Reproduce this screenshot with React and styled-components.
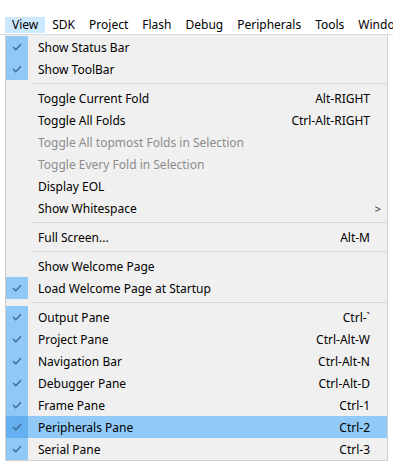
import React from "react";
import styled, { createGlobalStyle } from "styled-components";

const GlobalStyle = createGlobalStyle`
  body {
    margin: 0;
    background: #ffffff;
    font-family: "Noto Sans", "Open Sans", sans-serif;
    font-size: 12px;
    color: #000;
  }
`;

const Page = styled.div`
  width: 393px;
  height: 465px;
  overflow: hidden;
  padding-top: 17px;
  box-sizing: border-box;
`;

const MenuBar = styled.div`
  display: flex;
  padding-left: 5px;
  height: 17px;
  border-bottom: 1px solid #dadada;
  white-space: nowrap;
`;

const BarItem = styled.div`
  padding: 0 7px;
  line-height: 16px;
  height: 16px;
  background: ${(p) => (p.active ? "#cce8ff" : "transparent")};
`;

const Dropdown = styled.div`
  margin-left: 5px;
  width: 383px;
  background: #f0f0f0;
  border: 1px solid #cfcfcf;
  border-top: none;
  padding-top: 1px;
  box-sizing: border-box;
`;

const Row = styled.div`
  display: grid;
  grid-template-columns: 22px 10px 1fr auto 17px;
  height: 22px;
  align-items: center;
  background: ${(p) => (p.selected ? "#91c9f7" : "transparent")};
  color: ${(p) => (p.disabled ? "#8d8d8d" : "#000")};
`;

const CheckCell = styled.div`
  grid-column: 1;
  height: 22px;
  display: flex;
  align-items: center;
  justify-content: center;
  background: ${(p) =>
    p.checked ? (p.selected ? "#64aff0" : "#90c8f6") : "transparent"};
`;

const Label = styled.div`
  grid-column: 3;
  white-space: nowrap;
`;

const Shortcut = styled.div`
  grid-column: 4;
  white-space: nowrap;
  text-align: right;
`;

const Arrow = styled.div`
  grid-column: 4 / 6;
  justify-self: end;
  padding-right: 6px;
  font-size: 11px;
  color: #333;
`;

const Separator = styled.div`
  height: 7px;
  display: flex;
  align-items: center;
  padding-left: 26px;
  &::after {
    content: "";
    flex: 1;
    height: 1px;
    background: #d7d7d7;
  }
`;

const Tick = () => (
  <svg width="10" height="8" viewBox="0 0 10 8">
    <polyline
      points="1,4 3.8,6.8 9,1.2"
      fill="none"
      stroke="#3d6a93"
      strokeWidth="1.3"
    />
  </svg>
);

const menuBar = ["View", "SDK", "Project", "Flash", "Debug", "Peripherals", "Tools", "Window"];

const items = [
  { label: "Show Status Bar", checked: true },
  { label: "Show ToolBar", checked: true },
  "-",
  { label: "Toggle Current Fold", key: "Alt-RIGHT" },
  { label: "Toggle All Folds", key: "Ctrl-Alt-RIGHT" },
  { label: "Toggle All topmost Folds in Selection", disabled: true },
  { label: "Toggle Every Fold in Selection", disabled: true },
  { label: "Display EOL" },
  { label: "Show Whitespace", submenu: true },
  "-",
  { label: "Full Screen...", key: "Alt-M" },
  "-",
  { label: "Show Welcome Page" },
  { label: "Load Welcome Page at Startup", checked: true },
  "-",
  { label: "Output Pane", key: "Ctrl-`", checked: true },
  { label: "Project Pane", key: "Ctrl-Alt-W", checked: true },
  { label: "Navigation Bar", key: "Ctrl-Alt-N", checked: true },
  { label: "Debugger Pane", key: "Ctrl-Alt-D", checked: true },
  { label: "Frame Pane", key: "Ctrl-1", checked: true },
  { label: "Peripherals Pane", key: "Ctrl-2", checked: true, selected: true },
  { label: "Serial Pane", key: "Ctrl-3", checked: true },
];

export default function App() {
  return (
    <Page>
      <GlobalStyle />
      <MenuBar>
        {menuBar.map((m, i) => (
          <BarItem key={m} active={i === 0}>
            {m}
          </BarItem>
        ))}
      </MenuBar>
      <Dropdown>
        {items.map((it, i) =>
          it === "-" ? (
            <Separator key={i} />
          ) : (
            <Row key={i} selected={it.selected} disabled={it.disabled}>
              <CheckCell checked={it.checked} selected={it.selected}>
                {it.checked && <Tick />}
              </CheckCell>
              <Label>{it.label}</Label>
              {it.key && <Shortcut>{it.key}</Shortcut>}
              {it.submenu && <Arrow>&gt;</Arrow>}
            </Row>
          )
        )}
      </Dropdown>
    </Page>
  );
}
